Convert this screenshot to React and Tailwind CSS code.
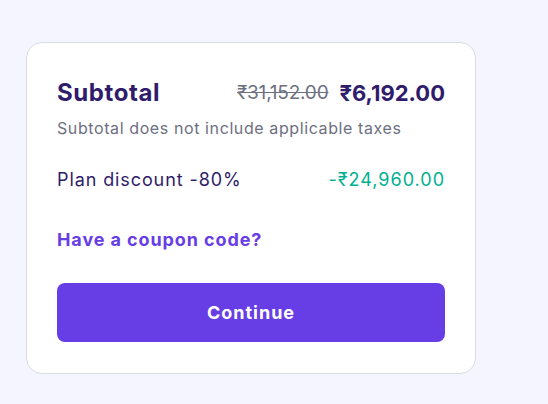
export default function App() {
  return (
    <div className="min-h-[404px] w-[548px] bg-[#f4f5ff] pt-[42px] pl-[26px]" style={{ fontFamily: "Inter, 'Noto Sans', sans-serif" }}>
      <div className="w-[450px] h-[332px] rounded-[16px] border border-[#dadce0] bg-white px-[30px] pt-[34px]">
        <div className="flex items-center justify-between h-[32px]">
          <span className="text-[24px] font-bold text-[#2f1c6a] tracking-[0.6px]">Subtotal</span>
          <div className="flex items-center gap-[11px]">
            <span className="text-[19px] text-[#6d7081] line-through tracking-[-0.2px]">₹31,152.00</span>
            <span className="text-[22px] font-bold text-[#2f1c6a]">₹6,192.00</span>
          </div>
        </div>
        <div className="mt-[7px] h-[24px] flex items-center">
          <span className="text-[16px] text-[#6d7081] tracking-[0.6px]">Subtotal does not include applicable taxes</span>
        </div>
        <div className="mt-[25px] flex items-center justify-between h-[28px]">
          <span className="text-[18px] text-[#2f1c6a] tracking-[0.9px]">Plan discount -80%</span>
          <span className="text-[18px] text-[#00b090] tracking-[1px]">-₹24,960.00</span>
        </div>
        <div className="mt-[32px] h-[28px] flex items-center">
          <span className="text-[18px] font-bold text-[#673de6] tracking-[0.9px]">Have a coupon code?</span>
        </div>
        <button className="mt-[30px] w-full h-[59px] rounded-[8px] bg-[#673de6] text-white text-[18px] font-bold tracking-[1px]">Continue</button>
      </div>
    </div>
  );
}
